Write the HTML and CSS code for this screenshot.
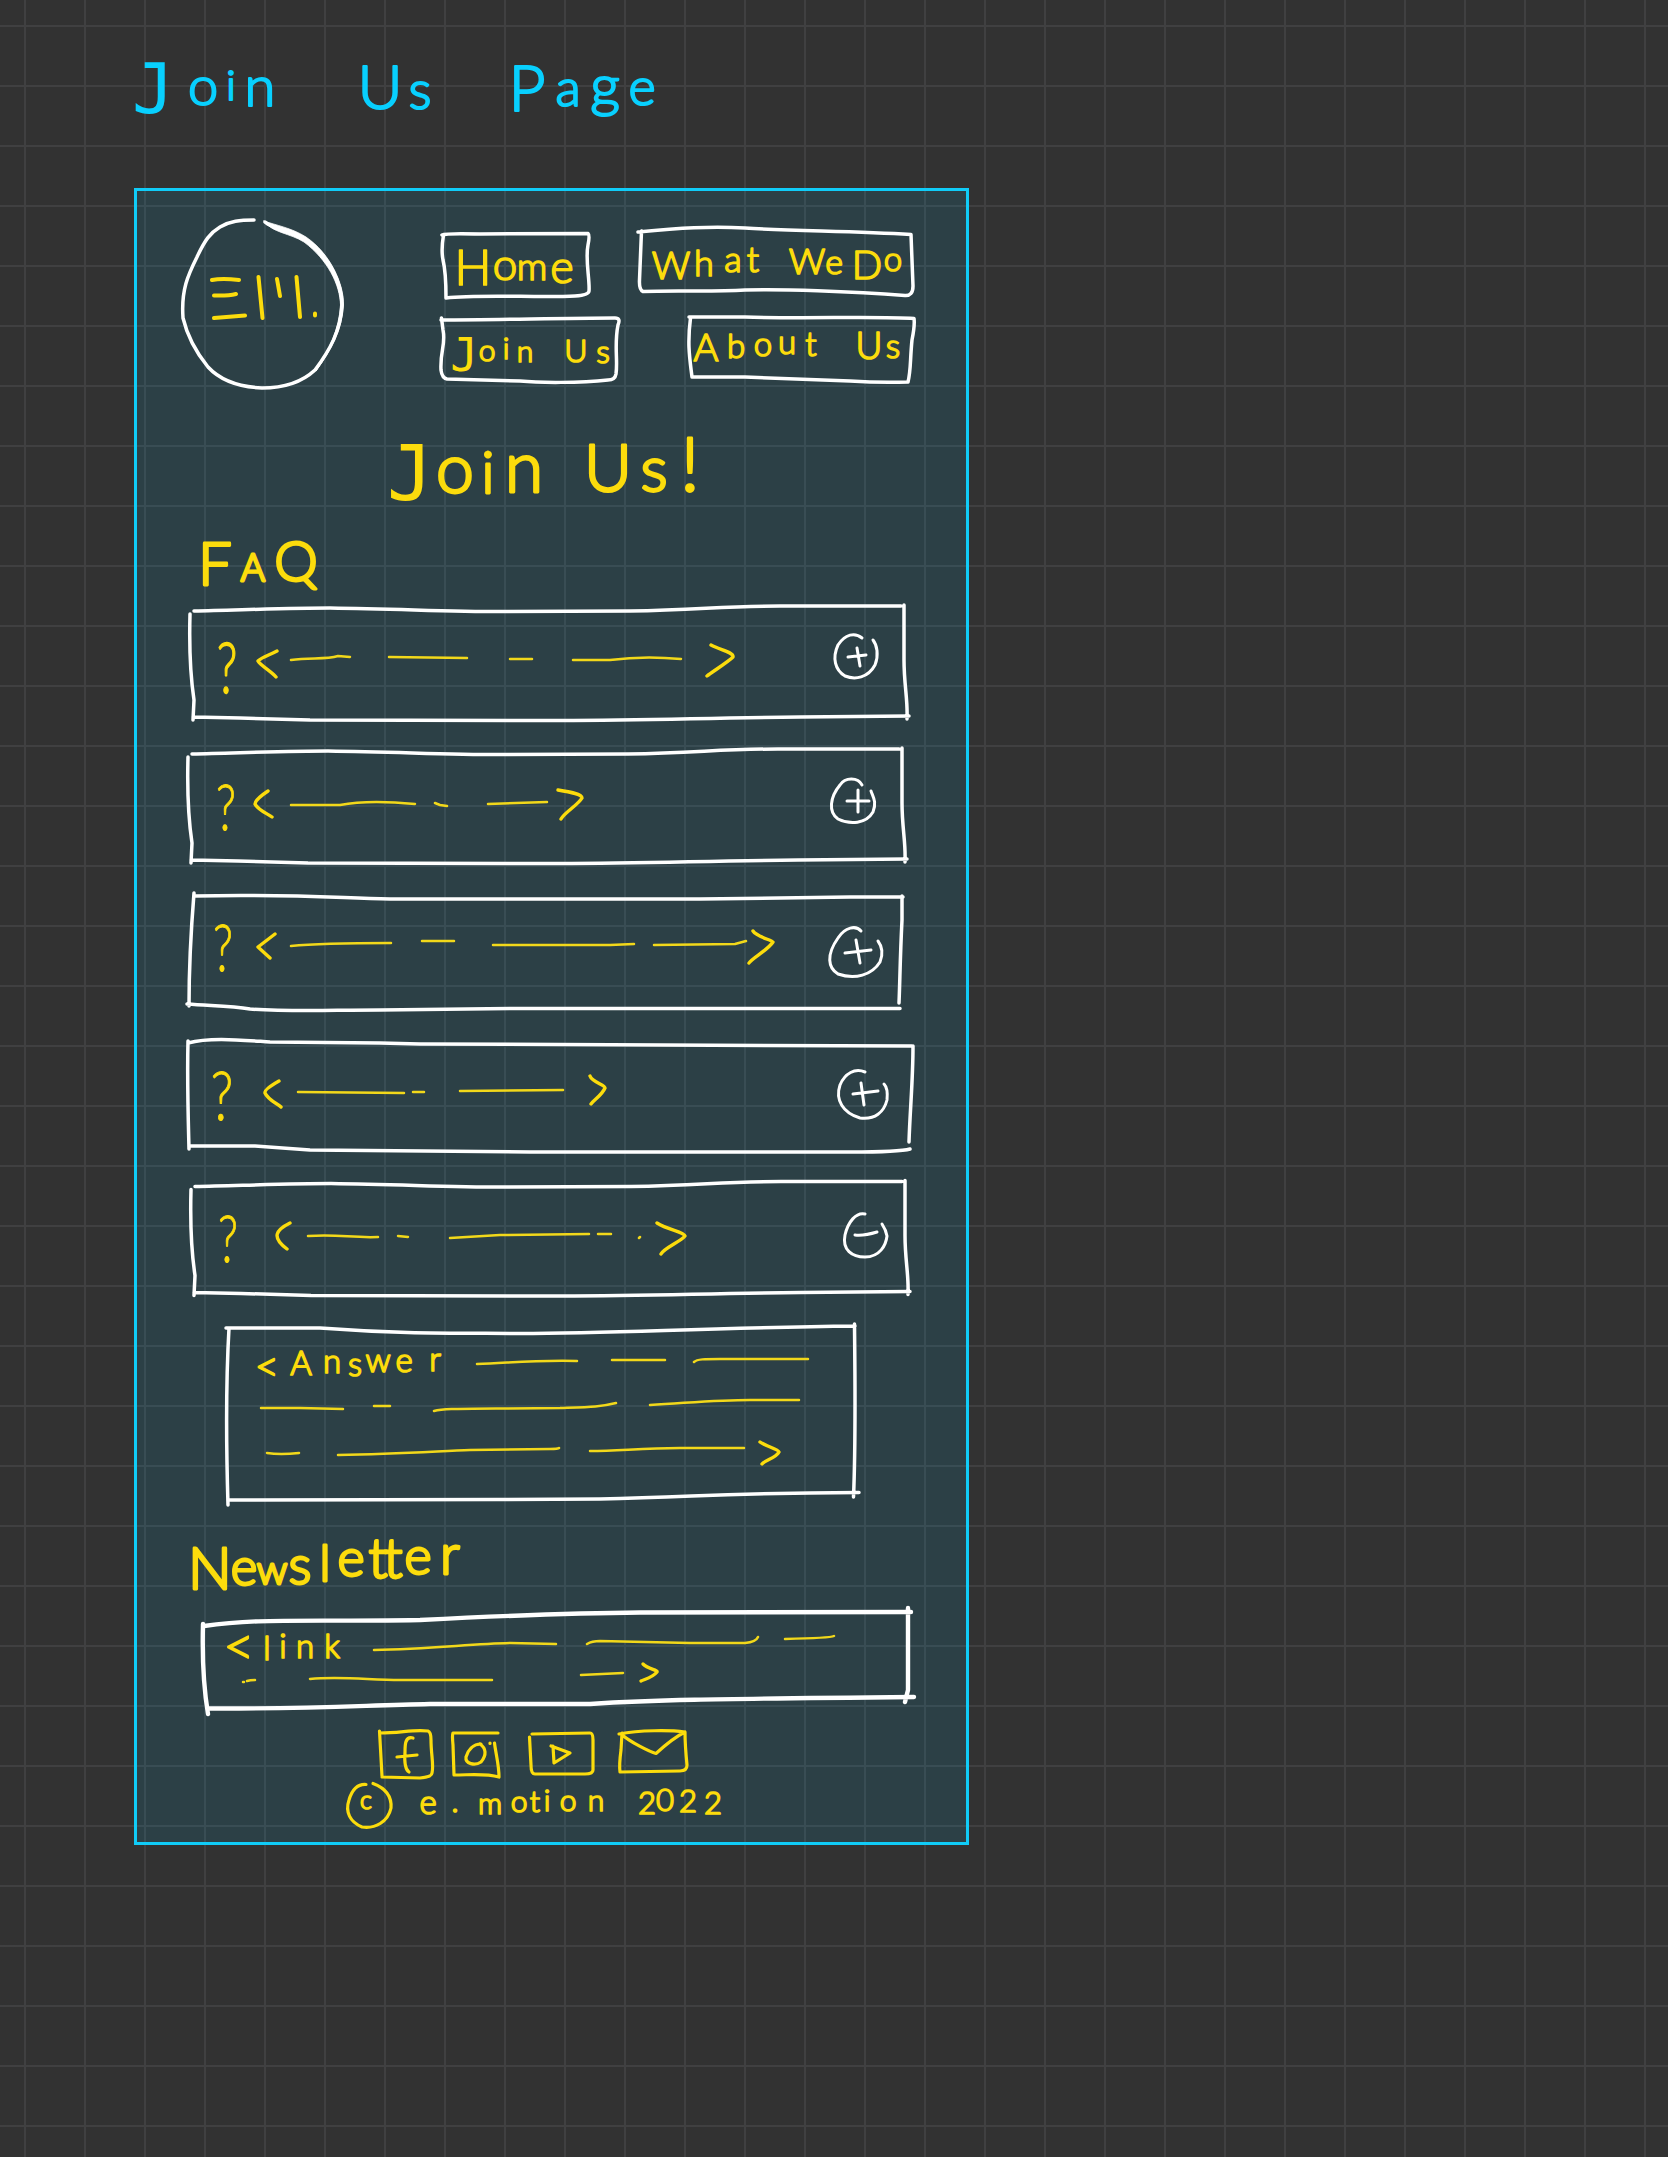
FILE: index.html
```html
<!DOCTYPE html>
<html lang="en">
<head>
<meta charset="utf-8">
<title>Join Us Page</title>
<link rel="stylesheet" href="styles.css">
</head>
<body>
<h1 class="page-title">
<svg width="560" height="100" viewBox="110 40 560 100" class="lettering cyan"><text y="113 105 100 106 106 109 109 109 111 106 106 105" x="153 203 231 260 300 380 400 420 527 568 605 642"><tspan class="slab" font-size="70">J</tspan><tspan font-size="54">o</tspan><tspan font-size="42">i</tspan><tspan font-size="56">n</tspan> <tspan font-size="62">U</tspan><tspan font-size="54" dx="20">s</tspan></text><text y="111 106 106 105" x="527 568 605 642"><tspan font-size="64">P</tspan><tspan font-size="52">a</tspan><tspan font-size="58">g</tspan><tspan font-size="52">e</tspan></text></svg>
</h1>

<main class="panel">
<header class="header">
<svg class="logo" role="img" aria-label="EM." width="171" height="180" viewBox="177 214 171 180">
<path class="box" d="M265 222C272 229 290 230 305 239C330 256 342 285 342 305C341 330 330 350 315 370C300 384 280 388 262 388C240 387 220 380 208 367C195 351 187 335 183 318C181 290 188 275 197 257C205 240 210 233 220 227C230 221 240 220 254 220"/>
<path class="taper" d="M264 221C275 225 292 228 306 237C331 254 344 285 343.500 305C342 330 331 350 316 371C329 350 339 330 340.500 305C340 285 328 260 304 242C290 233 272 233 264 221Z"/>
<path class="ink mark" d="M212 280Q222 278 239 280M214 295.500Q228 296 236 294M214 318L245 315.500M258.500 277L262.500 318M277 279L280 296M296.500 277L300 317M315 313.500v2"/>
</svg>
<nav class="nav">
<div class="nav-row">
<a><svg width="158" height="80" viewBox="436 222 158 80"><path class="box" d="M442 235Q446 233 480 234L588 233.500Q590 235 588 245C585 260 590 280 589 291Q589 295 575 296C540 298 480 294 446 298C446 275 445 268 443 260Q441 250 443.500 235"/><text x="473 505 532 562" y="285 280 280 283"><tspan font-size="49">H</tspan><tspan font-size="44">o</tspan><tspan font-size="38">m</tspan><tspan font-size="45">e</tspan></text></svg></a>
<a><svg width="284" height="80" viewBox="634 222 284 80"><path class="box" d="M638 232C680 228 710 226 745 228C790 231 850 231 911 234.500L913 286Q913 296 905 295.500C850 291 780 289 745 290C710 292 670 290 643 291.500Q639 290 639.500 280L641.500 231"/><text x="671 704 733 753 780 807 834 850 867 893" y="279 276 272 272 272 274 274 274 279 271"><tspan font-size="38">W</tspan><tspan font-size="36">hat</tspan> <tspan font-size="36">W</tspan><tspan font-size="34">e</tspan> <tspan font-size="40">D</tspan><tspan font-size="33">o</tspan></text></svg></a>
</div>
<div class="nav-row">
<a><svg width="188" height="78" viewBox="436 310 188 78"><path class="box" d="M441 320C500 320 560 318 615 318Q621 318 618 325C614 345 618 360 616 374Q615 380 608 380C580 383 540 383 520 381L447 379Q442 378 441 370C440 350 446 345 443 330L441.500 318"/><text x="464 487 506 525 550 576 603" y="371 361 359 362 362 362 363"><tspan class="slab" font-size="46">J</tspan><tspan font-size="30">oin</tspan> <tspan font-size="32">U</tspan><tspan font-size="32">s</tspan></text></svg></a>
<a><svg width="234" height="78" viewBox="684 310 234 78"><path class="box" d="M689 317L745 317C800 319 880 316 914 318.500Q915 325 912 340C910 360 911 370 908 382Q880 383 850 381L745 377L692 377C690 360 687 345 690.500 318"/><text x="706 736 763 787 811 840 869 893" y="361 358 356 354 356 356 359 358"><tspan font-size="38">A</tspan><tspan font-size="33">bout</tspan> <tspan font-size="37">U</tspan><tspan font-size="34">s</tspan></text></svg></a>
</div>
</nav>
</header>

<h2 class="hero"><svg class="lettering" width="340" height="84" viewBox="376 430 340 84"><text x="410 455 488 524 565 608 654 690" y="500 493 493 492 492 491 491 491"><tspan class="slab" font-size="76">J</tspan><tspan font-size="68">o</tspan><tspan font-size="58">i</tspan><tspan font-size="70">n</tspan> <tspan font-size="66">U</tspan><tspan font-size="64">s</tspan><tspan font-size="74">!</tspan></text></svg></h2>

<h3 class="faq-title"><svg class="lettering" width="135" height="62" viewBox="190 532 135 62"><text x="215 253 296" y="585 581 581"><tspan font-size="60">F</tspan><tspan font-size="37">A</tspan><tspan font-size="55">Q</tspan></text></svg></h3>

<section class="faq">
<svg width="734" height="130" viewBox="182 598 734 130">
<g id="row-frame" class="box"><path d="M194 611C240 610 290 608 330 608C400 609 450 611.500 500 611.500L630 611C700 610 720 606 780 606L901 606M904 605L904 660C904 685 908 700 907 719M909 716L800 717C700 718 650 720.500 560 720.500L310 720L240 718L193 717M190 614C189 650 191 680 194 700L193 720"/></g>
<text class="query" transform="translate(227 693) scale(.68 1)">?</text>
<path class="ink" d="M277 651C270 655 262 657 258 661C260 665 272 672 276 677M711 645C720 650 734 652 733 657C728 662 712 672 707 676"/>
<path class="dash" d="M291 660C310 657 325 660 338 656L350 657M389 657L467 658M510 659L532 659M573 660L610 660C640 656 660 657 681 659"/>
<path class="sign" d="M862 638C855 632 845 634 838 645C832 658 835 670 845 676C855 680 868 678 875 665C879 655 877 645 873 640M857 648L860 666M848 657L866 655"/>
</svg>
<svg width="734" height="130" viewBox="182 741 734 130">
<use href="#row-frame" x="-2" y="143"/>
<text class="query thin" transform="translate(226 830) scale(.66 .9)">?</text>
<path class="ink" d="M268 791C262 795 255 800 255 804C258 810 268 814 272 817M558 790C570 792 582 794 582 798C578 805 565 812 561 819"/>
<path class="dash" d="M291 805L340 805C360 801 385 801 415 804M435 803L440 805L447 806M488 804L547 802"/>
<path class="sign" d="M862 785C858 777 845 777 840 785C830 797 828 812 838 819C850 825 866 824 873 812C877 802 873 797 871 791M858 790L858 812M847 801L869 801"/>
</svg>
<svg width="734" height="130" viewBox="182 884 734 130">
<path class="box" d="M195 896C280 894 320 897 390 899L700 899L850 897L903 897M194 893C191 930 189 960 189 1006M187 1004C210 1006 230 1005 250 1009C290 1012 330 1010 380 1010L510 1008.500L900 1008.500M902 896L902 920C900 960 900 980 899 1003"/>
<text class="query thin" transform="translate(223 971) scale(.66 .94)">?</text>
<path class="ink" d="M275 934L258 947L270 958M753 931C757 937 772 940 773 942C768 950 752 958 749 963"/>
<path class="dash" d="M291 946C320 943 360 943 391 943M422 941L454 941M493 945L610 945L634 944M654 945L735 944L746 941"/>
<path class="sign" d="M861 931C856 925 845 927 838 938C826 955 828 968 838 974C855 980 872 975 880 962C884 952 881 945 878 941M856 940L860 963M845 953L871 950"/>
</svg>
<svg width="734" height="130" viewBox="182 1027 734 130">
<path class="box" d="M188 1043C210 1037 240 1040 270 1042L380 1043L420 1044L912 1046M188 1041C187 1080 188 1110 189 1149M913 1046C913 1080 910 1110 909 1142M190 1146L255 1146L310 1150L530 1152L850 1152Q900 1152 910 1149"/>
<text class="query thin" transform="translate(222 1120) scale(.74 .96)">?</text>
<path class="ink" d="M279 1081C272 1085 264 1090 265 1093C268 1100 278 1104 281 1107M590 1076C592 1082 605 1085 605 1088C602 1095 594 1100 591 1104"/>
<path class="dash" d="M298 1092L404 1093M413 1092L424 1092M460 1091L563 1090"/>
<path class="sign" d="M865 1072C855 1068 845 1073 840 1085C835 1100 843 1113 860 1118C875 1120 884 1112 887 1100C888 1090 886 1086 884 1084M861 1083L864 1105M853 1094L878 1091"/>
</svg>
<svg width="734" height="130" viewBox="182 1170 734 130">
<use href="#row-frame" x="1" y="575.500"/>
<text class="query thin" transform="translate(228 1262) scale(.66 .94)">?</text>
<path class="ink" d="M290 1223C276 1230 271 1237 287 1249M657 1223C668 1230 684 1232 685 1236C680 1242 664 1248 661 1254"/>
<path class="dash" d="M308 1236C340 1234 350 1238 378 1237M398 1236L408 1237M450 1238L500 1235L589 1234M598 1234L611 1234M639 1238l1-1"/>
<path class="sign" d="M865 1214C856 1212 848 1222 845 1235C842 1250 852 1257 865 1257C880 1257 886 1245 887 1236C886 1230 884 1227 882 1224M855 1235Q864 1236 877 1232"/>
</svg>
</section>

<section class="answer">
<svg width="646" height="194" viewBox="220 1316 646 194">
<path class="box" d="M226 1328L320 1328C400 1334 450 1333 520 1333.500C620 1333 700 1328 855 1326M229 1328C226 1380 226 1440 228 1505M228 1500C400 1499 480 1500 600 1499C700 1497 720 1493 859 1492.500M854.500 1324C855 1380 856 1440 853.500 1497"/>
<text x="267 301 332 355 378 404 435" y="1381 1375 1373 1376 1372 1372 1371"><tspan font-size="42">&lt;</tspan><tspan font-size="33">A</tspan><tspan font-size="33">nswer</tspan></text>
<path class="dash" d="M477 1364C510 1363 530 1360 577 1361M612 1360L665 1360M694 1362C697 1359 705 1359 720 1359L808 1359M261 1408L300 1408L343 1409M374 1406L390 1406M434 1411C445 1408 460 1409 560 1408C590 1407 600 1407 616 1403M650 1405C700 1402 720 1400 750 1400L799 1400M267 1453Q280 1455 299 1453M338 1455C400 1454 440 1451 470 1450L550 1449Q558 1449 559 1448M590 1451C620 1451 640 1448 680 1448L744 1448"/>
<path class="ink" d="M760 1442C765 1446 778 1449 779 1452C776 1458 765 1460 762 1464"/>
</svg>
</section>

<h3 class="news-title"><svg class="lettering" width="285" height="64" viewBox="186 1534 285 64"><text x="210 244 272 300 325 351 378 393 418 450" y="1589 1585 1584 1584 1581 1576 1578 1578 1574 1574"><tspan font-size="58">N</tspan><tspan font-size="51">e</tspan><tspan font-size="40">w</tspan><tspan font-size="54">s</tspan><tspan font-size="50">l</tspan><tspan font-size="52">e</tspan><tspan font-size="56">t</tspan><tspan font-size="56">t</tspan><tspan font-size="52">e</tspan><tspan font-size="56">r</tspan></text></svg></h3>

<section class="news">
<svg width="724" height="118" viewBox="196 1602 724 118">
<path class="box bold" d="M204 1626C260 1618 300 1622 420 1620C480 1617 560 1613 640 1612.500L911 1612M203 1624C202 1660 204 1690 208 1714M209 1708.500C300 1709 350 1706 430 1704L590 1704C650 1700 700 1699 914 1697M908 1608L908 1690L905 1702"/>
<text x="239 267 283 305 332" y="1665 1660 1658 1658 1658"><tspan font-size="54">&lt;</tspan><tspan font-size="33">link</tspan></text>
<path class="dash" d="M374 1650C430 1649 470 1644 510 1643L556 1644M587 1644Q592 1641 600 1641L690 1643L745 1643Q756 1642 758 1637M785 1639Q830 1638 834 1636M243 1682h1M247 1681Q250 1680 255 1680M310 1679C340 1676 370 1680 400 1680L492 1680M581 1675L623 1673"/>
<path class="ink" d="M643 1664C648 1669 658 1670 657 1672C652 1678 645 1679 641 1681"/>
</svg>
</section>

<footer>
<div class="social">
<svg width="60" height="58" viewBox="374 1724 60 58"><path class="icon" d="M379.500 1731L382 1776M380 1733C400 1733 415 1729 428 1731Q431 1732 431 1740C431 1755 434 1765 432 1773Q432 1777 420 1778L382 1777M413 1738C405 1736 405 1745 405 1752C404 1765 406 1770 409 1772M397 1757L417 1755"/></svg>
<svg width="62" height="58" viewBox="448 1724 62 58"><path class="icon" d="M498 1733L453 1733Q452 1735 453 1745L454 1775C470 1775 485 1773 499 1777C499 1765 496 1755 494.500 1743M481 1744C473 1744 468 1750 466 1757C465 1764 475 1766 481 1762C487 1755 486 1748 480 1744M490 1743v.5"/></svg>
<svg width="76" height="58" viewBox="524 1724 76 58"><path class="icon" d="M532 1734L590 1733Q593 1733 593 1740L593 1770Q593 1774 585 1774L535 1774Q531 1774 531 1765L529.500 1737M551 1746L570 1753L554 1763L553 1746"/></svg>
<svg width="78" height="58" viewBox="614 1724 78 58"><path class="icon" d="M619 1734C640 1730 670 1730 685 1732Q685 1745 687 1765Q687 1771 680 1771L620 1772Q619 1765 621 1750L622 1733M621 1734C630 1742 650 1752 656 1753.500C662 1748 675 1737 685 1732"/></svg>
</div>
<svg class="copyright" width="395" height="50" viewBox="340 1782 395 50">
<path class="icon" d="M366 1784.500C358 1784 352 1790 349 1800C345 1812 350 1822 362 1827C375 1829 388 1822 391 1808C392 1795 385 1788 373 1783.500"/>
<text x="366 397 428 455 490 519 535 547 568 596 622 647 665 688 713" y="1809 1808 1814 1812 1814 1812 1812 1811 1811 1811 1811 1814 1811 1812 1814"><tspan font-size="25">c</tspan> <tspan font-size="33">e</tspan><tspan font-size="30">.motion</tspan> <tspan font-size="31">2022</tspan></text>
</svg>
</footer>
</main>
</body>
</html>
```
FILE: styles.css
```css
:root {
  --cyan: #10ccf8;
  --yellow: #fcdc0c;
  --line: #404041;
}

body {
  margin: 0;
  min-height: 2157px;
  overflow: hidden;
  font-family: Lato, "Open Sans", sans-serif;
  background-color: #323232;
  background-image:
    linear-gradient(to right, var(--line) 2.5px, transparent 2.5px),
    linear-gradient(to bottom, var(--line) 2.5px, transparent 2.5px);
  background-size: 60px 60px;
  background-position: 24px 0, 0 25px;
}

h1, h2, h3 { margin: 0; font-weight: 300; }
svg { display: block; overflow: visible; }

.page-title { height: 148px; padding: 40px 0 0 110px; box-sizing: border-box; }

.panel {
  box-sizing: border-box;
  width: 835px;
  height: 1657px;
  margin: 40px 0 0 134px;
  border: 3px solid var(--cyan);
  background: rgba(0, 200, 255, .1);
}

.header { display: flex; gap: 88px; padding: 23px 0 0 40px; }
.nav { display: flex; flex-direction: column; gap: 8px; width: 482px; padding-top: 8px; }
.nav-row { display: flex; justify-content: space-between; }

.hero { padding: 36px 0 0 239px; }
.faq-title { padding: 18px 0 0 53px; }
.faq { display: flex; flex-direction: column; gap: 13px; padding: 4px 0 0 45px; }
.answer { padding: 16px 0 0 83px; }
.news-title { padding: 24px 0 0 49px; }
.news { padding: 4px 0 0 59px; }
.social { display: flex; gap: 14px; padding: 4px 0 0 237px; }
.copyright { margin-left: 203px; }

/* Pen strokes */
path { fill: none; stroke-linecap: round; stroke-linejoin: round; }
.box { stroke: #fff; stroke-width: 3.5; }
.bold { stroke-width: 4.4; }
.taper { fill: #fff; stroke: #fff; stroke-width: .8; }
.sign { stroke: #fff; stroke-width: 3; }
.ink { stroke: var(--yellow); stroke-width: 3.4; }
.mark { stroke-width: 4; }
.dash { stroke: #f2d81a; stroke-width: 2.5; }
.icon { stroke: var(--yellow); stroke-width: 3.2; }

/* Lettering: light face thickened with a round pen */
text {
  fill: var(--yellow);
  stroke: var(--yellow);
  stroke-width: 1.7;
  stroke-linejoin: round;
  font-weight: 300;
  text-anchor: middle;
  white-space: pre;
}
.lettering text { stroke-width: 2.8; }
.cyan text { fill: #08d0ff; stroke: #08d0ff; stroke-width: 2.2; }
text .slab, .lettering text .slab { font-family: "DejaVu Sans Mono", monospace; font-weight: 400; stroke-width: 0; }
.query { font-size: 70px; stroke-width: 1.4; }
.thin { stroke-width: 1; }
```
